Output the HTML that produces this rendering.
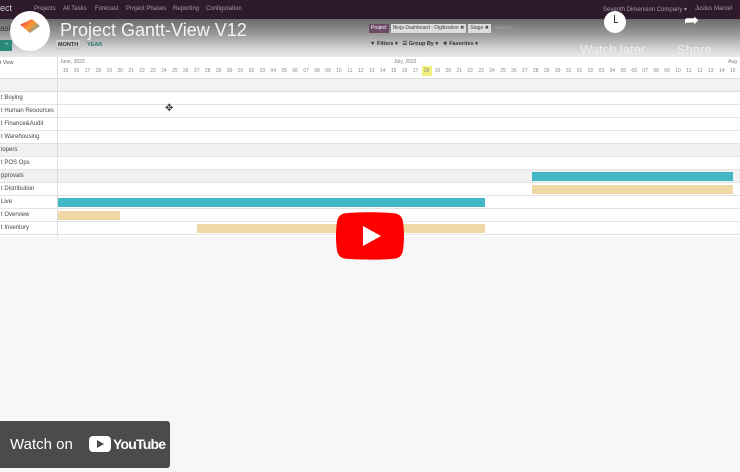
<!DOCTYPE html>
<html><head><meta charset="utf-8"><style>
*{margin:0;padding:0;box-sizing:border-box}
body{width:740px;height:472px;overflow:hidden;background:#f7f7f7;font-family:"Liberation Sans",sans-serif;position:relative}
.nav{position:absolute;left:0;top:0;width:740px;height:19px;background:#2e1a2b;color:#a99aa6;font-size:6px;white-space:nowrap}
.nav span{position:absolute;top:6px;white-space:nowrap}
.hdr{position:absolute;left:0;top:19px;width:740px;height:38px;background:linear-gradient(#6a6a6a,#9a9a9a 40%,#d6d6d6 80%,#eaeaea)}
.grid{position:absolute;left:0;top:57px;width:740px;height:180px;background:#fff}
.lcol{position:absolute;left:0;top:0;width:58px;height:180px;border-right:1px solid #ddd}
.row{position:absolute;left:0;width:740px;height:13px;border-bottom:1px solid #e4e4e4;font-size:6px;color:#444;white-space:nowrap}
.row b{font-weight:normal;position:absolute;left:1px;top:3px}
.days{position:absolute;left:60px;top:11px;display:flex;font-size:5px;color:#888}
.days i{font-style:normal;width:10.95px;text-align:center}
.bar{position:absolute;height:9px}
.t{background:#43b7c6}.n{background:#efd8a3}
.title{position:absolute;left:60px;top:20px;color:#f4f4f4;font-size:18px}
.wl{position:absolute;color:#eee;font-size:13px;top:42px}
.circ{position:absolute;width:22px;height:22px;border-radius:50%;background:#fff;top:11px}
</style></head><body>
<div class="nav"><span style="left:0;font-size:9px;top:3px;color:#ccc">ect</span><span style="left:34px">Projects</span><span style="left:63px">All Tasks</span><span style="left:95px">Forecast</span><span style="left:126px">Project Phases</span><span style="left:173px">Reporting</span><span style="left:206px">Configuration</span><span style="left:603px">Seventh Dimension Company ▾</span><span style="left:695px">Justus Marcel</span></div>
<div class="hdr">
<div style="position:absolute;left:0;top:5px;font-size:8px;color:#333">ask</div>
<div style="position:absolute;left:0;top:21px;width:12px;height:11px;background:#2a8a7a;color:#fff;font-size:7px;text-align:center">→</div>
<div style="position:absolute;left:56px;top:21px;width:24px;height:10px;background:#ccc;font-size:5.5px;font-weight:bold;color:#333;padding:2px 2px">MONTH</div>
<div style="position:absolute;left:87px;top:23px;font-size:5.5px;font-weight:bold;color:#2a7a70">YEAR</div>
<div style="position:absolute;left:369px;top:5px;height:9px;font-size:5px;color:#444;display:flex;gap:2px;white-space:nowrap"><span style="background:#6b4a65;color:#fff;padding:1px 2px">Project</span><span style="background:#ddd;padding:1px 2px">Ninja Dashboard - Digitization ✖</span><span style="background:#ddd;padding:1px 2px">Stage ✖</span><span style="color:#aaa;padding:1px 2px">Search...</span></div>
<div style="position:absolute;left:370px;top:22px;font-size:5.5px;font-weight:bold;color:#333;white-space:nowrap">▼ Filters ▾ &nbsp; ☰ Group By ▾ &nbsp; ★ Favorites ▾</div>
</div>
<div class="title">Project Gantt-View V12</div>
<div style="position:absolute;left:10px;top:11px;width:40px;height:40px;border-radius:50%;background:#fff"><div style="position:absolute;left:10px;top:8px;width:20px;height:14px;background:linear-gradient(135deg,#d34,#f93,#39c);clip-path:polygon(0 40%,60% 0,100% 50%,50% 100%)"></div></div>
<div class="circ" style="left:604px"></div><div style="position:absolute;left:614px;top:15px;width:4px;height:8px;border-left:1.5px solid #333;border-bottom:1.5px solid #333"></div>
<div style="position:absolute;left:684px;top:10px;color:#fff;font-size:18px">➦</div>
<div class="wl" style="left:580px">Watch later</div><div class="wl" style="left:677px">Share</div>
<div class="grid">
<div style="position:absolute;left:60px;top:2px;font-size:5px;color:#777">June, 2022</div>
<div style="position:absolute;left:394px;top:2px;font-size:5px;color:#777">July, 2022</div>
<div style="position:absolute;left:728px;top:2px;font-size:5px;color:#777">Aug</div>
<div style="position:absolute;left:0;top:3px;font-size:5px;color:#555">t View</div>
<div style="position:absolute;left:422px;top:9px;width:10px;height:10px;background:#f0f07a"></div>
<div class="days"><i>15</i><i>16</i><i>17</i><i>18</i><i>19</i><i>20</i><i>21</i><i>22</i><i>23</i><i>24</i><i>25</i><i>26</i><i>27</i><i>28</i><i>29</i><i>30</i><i>01</i><i>02</i><i>03</i><i>04</i><i>05</i><i>06</i><i>07</i><i>08</i><i>09</i><i>10</i><i>11</i><i>12</i><i>13</i><i>14</i><i>15</i><i>16</i><i>17</i><i>18</i><i>19</i><i>20</i><i>21</i><i>22</i><i>23</i><i>24</i><i>25</i><i>26</i><i>27</i><i>28</i><i>29</i><i>30</i><i>31</i><i>01</i><i>02</i><i>03</i><i>04</i><i>05</i><i>06</i><i>07</i><i>08</i><i>09</i><i>10</i><i>11</i><i>12</i><i>13</i><i>14</i><i>15</i></div>
<div style="position:absolute;left:0;top:21px;width:740px;height:14px;border-top:1px solid #ddd;border-bottom:1px solid #ddd;background:#f2f2f2"></div>
<div class="row" style="top:35px"><b>t Buying</b></div>
<div class="row" style="top:48px"><b>t Human Resources</b></div>
<div class="row" style="top:61px"><b>t Finance&amp;Audit</b></div>
<div class="row" style="top:74px"><b>t Warehousing</b></div>
<div class="row" style="top:87px;background:#f1f1f1"><b>lopers</b></div>
<div class="row" style="top:100px"><b>t POS Ops</b></div>
<div class="row" style="top:113px;background:#f1f1f1"><b>pprovals</b></div>
<div class="row" style="top:126px"><b>t Distribution</b></div>
<div class="row" style="top:139px"><b>Live</b></div>
<div class="row" style="top:152px"><b>t Overview</b></div>
<div class="row" style="top:165px"><b>t Inventory</b></div>
<div class="lcol"></div>
<div class="bar t" style="left:532px;top:115px;width:201px"></div>
<div class="bar n" style="left:532px;top:128px;width:201px"></div>
<div class="bar t" style="left:58px;top:141px;width:427px"></div>
<div class="bar n" style="left:58px;top:154px;width:62px"></div>
<div class="bar n" style="left:197px;top:167px;width:288px"></div>
</div>
<div style="position:absolute;left:165px;top:103px;font-size:10px;color:#333">✥</div>
<svg style="position:absolute;left:336px;top:212px" width="68" height="48" viewBox="0 0 68 48"><path d="M66.5 7.7c-.8-2.9-3-5.2-5.9-6C55.3.3 34 .3 34 .3S12.7.3 7.4 1.7c-2.9.8-5.1 3.1-5.9 6C0 13 0 24 0 24s0 11 1.5 16.3c.8 2.9 3 5.2 5.9 6C12.7 47.7 34 47.7 34 47.7s21.3 0 26.6-1.4c2.9-.8 5.1-3.1 5.9-6C68 35 68 24 68 24s0-11-1.5-16.3z" fill="#f00"/><path d="M27 34V14l18 10z" fill="#fff"/></svg>
<div style="position:absolute;left:0;top:421px;width:170px;height:47px;background:#4b4b4b;border-radius:0 3px 3px 0;color:#fff">
<span style="position:absolute;left:10px;top:15px;font-size:15px">Watch on</span>
<div style="position:absolute;left:89px;top:15px;width:22px;height:16px;background:#fff;border-radius:4px"></div>
<div style="position:absolute;left:97px;top:19px;border-left:7px solid #4b4b4b;border-top:4px solid transparent;border-bottom:4px solid transparent"></div>
<span style="position:absolute;left:113px;top:15px;font-size:14px;font-weight:bold;letter-spacing:-0.8px">YouTube</span>
</div>
</body></html>
